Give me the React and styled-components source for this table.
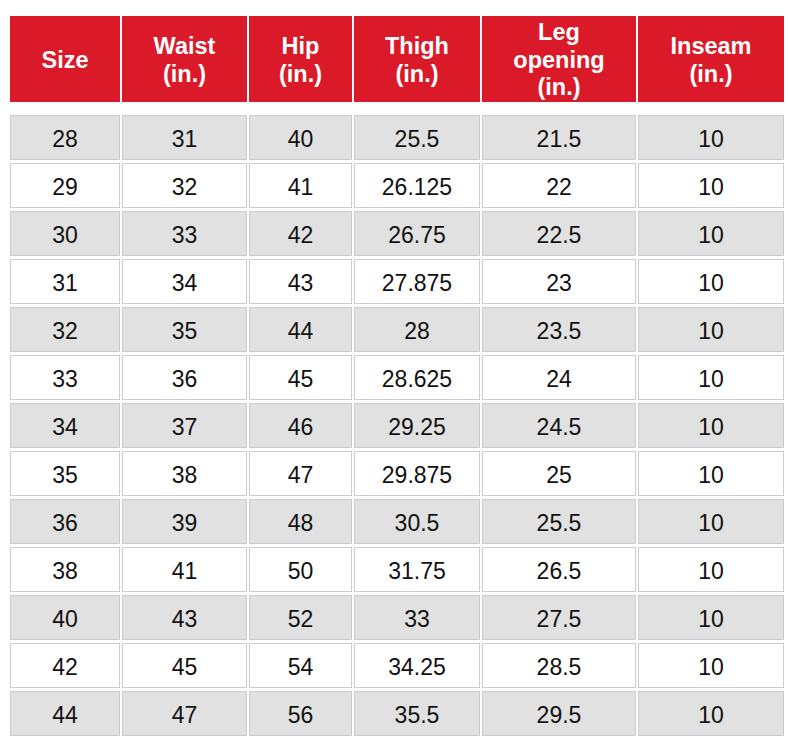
import React from "react";
import styled, { createGlobalStyle } from "styled-components";

const GlobalStyle = createGlobalStyle`
  html, body { margin: 0; padding: 0; background: #ffffff; }
  body { font-family: "Liberation Sans", Arial, Helvetica, sans-serif; }
`;

const Page = styled.div`
  padding: 16px 4px 8px 10px;
`;

const Grid = styled.div`
  display: grid;
  grid-template-columns: 110px 125px 103px 126px 154px 146px;
  column-gap: 2px;
  row-gap: 3px;
`;

const HeadRow = styled(Grid)`
  margin-bottom: 13px;
`;

const HeadCell = styled.div`
  box-sizing: border-box;
  height: 86px;
  padding-top: 3px;
  background: #db1a29;
  color: #ffffff;
  font-weight: 700;
  font-size: 23.5px;
  line-height: 27.5px;
  display: flex;
  align-items: center;
  justify-content: center;
  text-align: center;
`;

const Cell = styled.div`
  box-sizing: border-box;
  height: 45px;
  border: 1px solid #cccccc;
  background: ${(p) => (p.$shade ? "#e1e1e1" : "#ffffff")};
  color: #111111;
  font-size: 23px;
  display: flex;
  align-items: center;
  justify-content: center;
  padding-top: 4px;
`;

const headers = [
  ["Size"],
  ["Waist", "(in.)"],
  ["Hip", "(in.)"],
  ["Thigh", "(in.)"],
  ["Leg", "opening", "(in.)"],
  ["Inseam", "(in.)"],
];

const rows = [
  ["28", "31", "40", "25.5", "21.5", "10"],
  ["29", "32", "41", "26.125", "22", "10"],
  ["30", "33", "42", "26.75", "22.5", "10"],
  ["31", "34", "43", "27.875", "23", "10"],
  ["32", "35", "44", "28", "23.5", "10"],
  ["33", "36", "45", "28.625", "24", "10"],
  ["34", "37", "46", "29.25", "24.5", "10"],
  ["35", "38", "47", "29.875", "25", "10"],
  ["36", "39", "48", "30.5", "25.5", "10"],
  ["38", "41", "50", "31.75", "26.5", "10"],
  ["40", "43", "52", "33", "27.5", "10"],
  ["42", "45", "54", "34.25", "28.5", "10"],
  ["44", "47", "56", "35.5", "29.5", "10"],
];

export default function App() {
  return (
    <Page>
      <GlobalStyle />
      <HeadRow>
        {headers.map((lines, i) => (
          <HeadCell key={i}>
            <div>
              {lines.map((l, j) => (
                <div key={j}>{l}</div>
              ))}
            </div>
          </HeadCell>
        ))}
      </HeadRow>
      <Grid>
        {rows.map((r, ri) =>
          r.map((v, ci) => (
            <Cell key={`${ri}-${ci}`} $shade={ri % 2 === 0}>
              {v}
            </Cell>
          ))
        )}
      </Grid>
    </Page>
  );
}
